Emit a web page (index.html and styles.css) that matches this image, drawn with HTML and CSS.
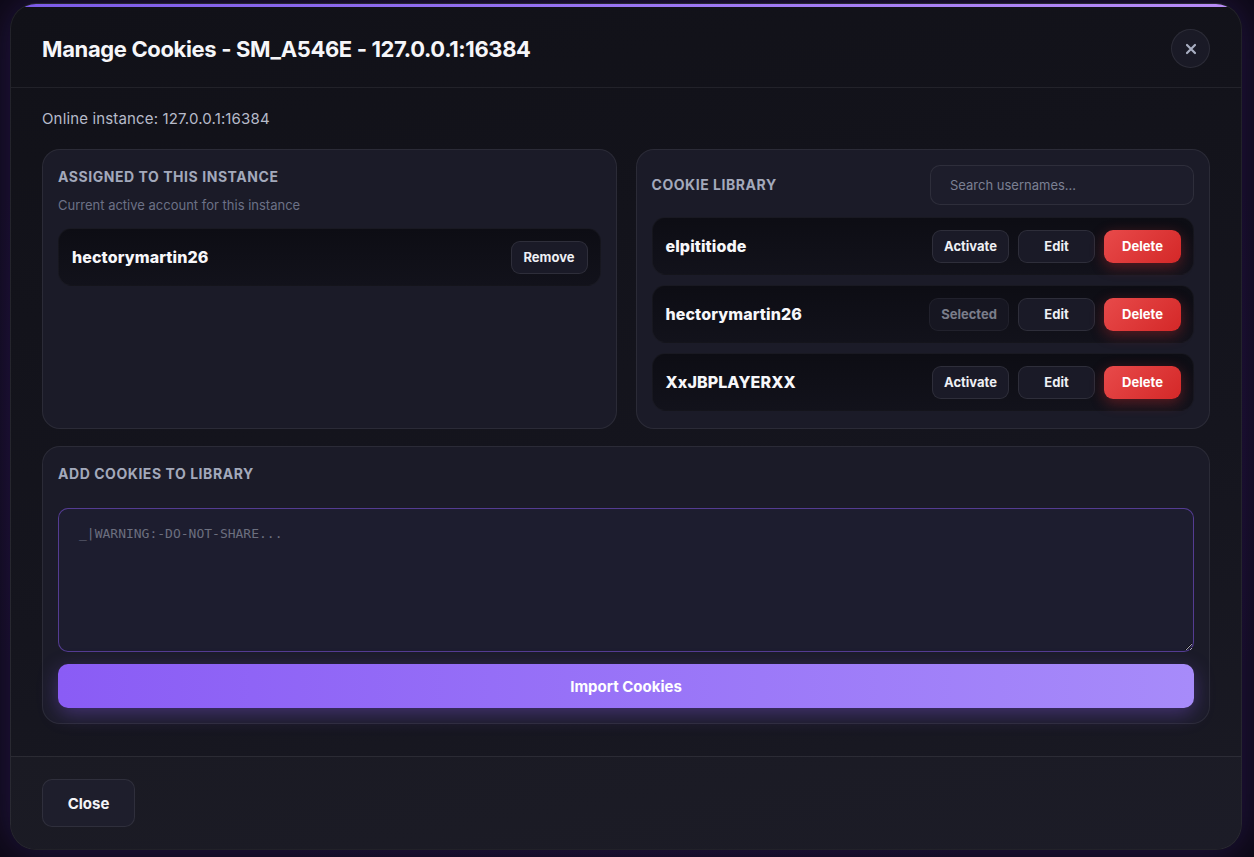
FILE: index.html
```html
<!DOCTYPE html>
<html lang="en">
<head>
<meta charset="utf-8">
<title>Manage Cookies</title>
<link rel="stylesheet" href="styles.css">
</head>
<body>
<div class="modal">
  <header class="modal-header">
    <h1 class="modal-title">Manage Cookies - SM_A546E - 127.0.0.1:16384</h1>
    <button class="icon-close" aria-label="Close">
      <svg width="12" height="12" viewBox="0 0 12 12"><path d="M2 2 L10 10 M10 2 L2 10" stroke="currentColor" stroke-width="2.2" stroke-linecap="round"/></svg>
    </button>
  </header>
  <main class="modal-body">
    <p class="status">Online instance: 127.0.0.1:16384</p>
    <div class="grid">
      <section class="panel">
        <h2 class="panel-title">Assigned to this instance</h2>
        <p class="panel-sub">Current active account for this instance</p>
        <div class="row">
          <span class="user">hectorymartin26</span>
          <div class="actions"><button class="btn btn-sm">Remove</button></div>
        </div>
      </section>
      <section class="panel panel-lib">
        <div class="lib-head">
          <h2 class="panel-title">Cookie Library</h2>
          <input class="search" type="text" placeholder="Search usernames...">
        </div>
        <div class="list">
          <div class="row">
            <span class="user">elpititiode</span>
            <div class="actions">
              <button class="btn">Activate</button>
              <button class="btn">Edit</button>
              <button class="btn btn-danger">Delete</button>
            </div>
          </div>
          <div class="row">
            <span class="user">hectorymartin26</span>
            <div class="actions">
              <button class="btn btn-disabled">Selected</button>
              <button class="btn">Edit</button>
              <button class="btn btn-danger">Delete</button>
            </div>
          </div>
          <div class="row">
            <span class="user">XxJBPLAYERXX</span>
            <div class="actions">
              <button class="btn">Activate</button>
              <button class="btn">Edit</button>
              <button class="btn btn-danger">Delete</button>
            </div>
          </div>
        </div>
      </section>
    </div>
    <section class="panel panel-add">
      <h2 class="panel-title">Add cookies to library</h2>
      <textarea class="cookie-input" placeholder="_|WARNING:-DO-NOT-SHARE..."></textarea>
      <button class="btn-primary">Import Cookies</button>
    </section>
  </main>
  <footer class="modal-footer">
    <button class="btn-footer">Close</button>
  </footer>
</div>
</body>
</html>
```
FILE: styles.css
```css
* { box-sizing: border-box; }
html, body { margin: 0; height: 100%; }
body {
  background: radial-gradient(ellipse at center, #1a1030 0%, #0c0914 80%);
  font-family: Inter, "Noto Sans", sans-serif;
  color: #e8e9f0;
  padding: 3px 12px 7px 10px;
  overflow: hidden;
}
button, input, textarea { font-family: inherit; }
.modal {
  position: relative;
  height: 847px;
  border-radius: 26px;
  border: 1px solid rgba(255,255,255,0.07);
  background: linear-gradient(170deg, #111118 0%, #15151e 60%, #1a1a24 100%);
  box-shadow: 0 0 40px rgba(100, 50, 200, 0.28);
  overflow: hidden;
  display: flex;
  flex-direction: column;
}
.modal::before {
  content: "";
  position: absolute;
  left: 0; right: 0; top: 0;
  height: 3px;
  background: linear-gradient(90deg, #7c5ae8 0%, #9a74f4 50%, #b98cf8 100%);
}
.modal-header {
  display: flex;
  align-items: center;
  justify-content: space-between;
  padding: 25px 31px 19px 31px;
  border-bottom: 1px solid rgba(255,255,255,0.07);
}
.modal-title {
  margin: 0;
  font-size: 22px;
  font-weight: 700;
  color: #f6f6f9;
  letter-spacing: -0.36px;
}
.icon-close {
  width: 39px; height: 39px;
  border-radius: 50%;
  background: #1a1a26;
  border: 1px solid rgba(255,255,255,0.08);
  color: #a9afc2;
  display: flex; align-items: center; justify-content: center;
  padding: 0;
}
.modal-body {
  padding: 21px 31px 32px 31px;
  flex: 1;
}
.status {
  margin: 0 0 20px;
  font-size: 15px;
  line-height: 20px;
  letter-spacing: 0.15px;
  color: #b7bbca;
}
.grid {
  display: grid;
  grid-template-columns: 1fr 1fr;
  gap: 19px;
  margin-bottom: 17px;
}
.panel {
  background: #1b1b28;
  border: 1px solid rgba(255,255,255,0.07);
  border-radius: 18px;
  padding: 16px 15px 15px;
  height: 280px;
}
.panel-title {
  margin: 0;
  font-size: 14px;
  font-weight: 700;
  text-transform: uppercase;
  letter-spacing: 0.55px;
  color: #a3a9bb;
  line-height: 22px;
}
.panel-sub {
  margin: 9px 0 15px;
  font-size: 13px;
  line-height: 16px;
  color: #6c7186;
}
.row {
  display: flex;
  align-items: center;
  justify-content: space-between;
  height: 58px;
  padding: 0 12px 0 13px;
  border-radius: 14px;
  background: linear-gradient(180deg, #0d0d14 0%, #12121b 100%);
  border: 1px solid rgba(255,255,255,0.03);
}
.user {
  font-size: 16px;
  font-weight: 800;
  letter-spacing: 0.1px;
  color: #f7f7fa;
}
.actions { display: flex; gap: 9px; }
.btn {
  min-width: 77px;
  height: 33px;
  padding: 0 11px;
  border-radius: 9px;
  background: #1a1a27;
  border: 1px solid rgba(255,255,255,0.09);
  color: #eeeff4;
  font-size: 13px;
  font-weight: 700;
}
.btn-sm { min-width: 77px; }
.btn-disabled {
  color: #7a7d8a;
  background: #161621;
  border-color: rgba(255,255,255,0.05);
  min-width: 80px;
  padding: 0 8px;
}
.btn-danger {
  border: none;
  background: linear-gradient(135deg, #e84a4a 0%, #d42828 100%);
  color: #fff;
  box-shadow: 0 4px 14px rgba(230, 50, 50, 0.35);
}
.lib-head {
  display: flex;
  align-items: center;
  justify-content: space-between;
  margin-top: -1px;
  margin-bottom: 12px;
}
.search {
  width: 264px;
  height: 40px;
  border-radius: 10px;
  background: #1d1d2b;
  border: 1px solid rgba(255,255,255,0.08);
  padding: 0 19px;
  font-size: 13px;
  color: #e8e9f0;
  outline: none;
}
.search::placeholder { color: #7b8093; }
.list { display: flex; flex-direction: column; gap: 10px; }
.list .row { padding-right: 12px; }
.panel-add {
  height: 278px;
  display: flex;
  flex-direction: column;
}
.cookie-input {
  margin-top: 23px;
  height: 144px;
  width: 100%;
  background: #1d1d2f;
  border: 1px solid rgba(139, 92, 246, 0.5);
  border-radius: 10px;
  padding: 17px 20px;
  color: #e8e9f0;
  font-family: "DejaVu Sans Mono", "Liberation Mono", monospace;
  font-size: 13px;
  outline: none;
}
.cookie-input::placeholder { color: #6c6f7f; }
.btn-primary {
  margin-top: 12px;
  height: 44px;
  width: 100%;
  border: none;
  border-radius: 10px;
  background: linear-gradient(90deg, #8a5cf5 0%, #a78bfa 100%);
  color: #fff;
  font-size: 15px;
  font-weight: 700;
  box-shadow: 0 6px 20px rgba(139, 92, 246, 0.35);
}
.modal-footer {
  border-top: 1px solid rgba(255,255,255,0.07);
  background: linear-gradient(170deg, #1a1a23 0%, #1c1c27 100%);
  padding: 22px 31px 22px;
}
.btn-footer {
  width: 93px;
  height: 48px;
  border-radius: 10px;
  background: #1e1e2c;
  border: 1px solid rgba(255,255,255,0.08);
  color: #f4f4f8;
  font-size: 15px;
  font-weight: 700;
}
```
